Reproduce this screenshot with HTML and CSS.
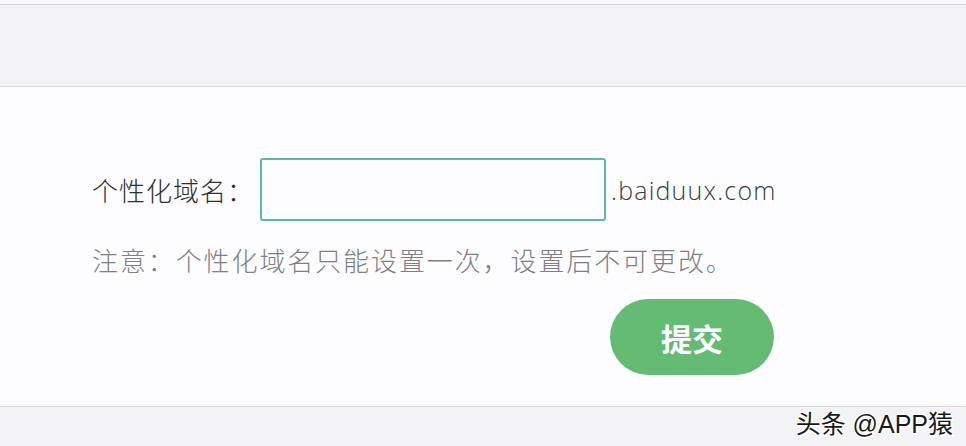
FILE: index.html
```html
<!DOCTYPE html>
<html lang="zh-CN">
<head>
<meta charset="utf-8">
<title>个性化域名</title>
<link rel="stylesheet" href="styles.css">
</head>
<body>
<div class="top-strip"></div>
<div class="header-band"></div>
<main class="panel">
  <form class="domain-form">
    <div class="field-row">
      <label class="field-label" for="domain">个性化域名：</label>
      <input class="field-input" id="domain" type="text">
      <span class="field-suffix">.baiduux.com</span>
    </div>
    <p class="notice">注意：个性化域名只能设置一次，设置后不可更改。</p>
    <button class="submit-btn" type="button">提交</button>
  </form>
</main>
<div class="footer-band"></div>
<div class="watermark">头条 @APP猿</div>
</body>
</html>
```

FILE: styles.css
```css
html, body {
  margin: 0;
  padding: 0;
}
body {
  width: 966px;
  height: 446px;
  overflow: hidden;
  background: #f3f2f4;
  font-family: "Noto Sans CJK SC", "Noto Sans", sans-serif;
  position: relative;
}
.top-strip {
  height: 4px;
  background: #f8f7f9;
  border-bottom: 1px solid #d9d8da;
}
.header-band {
  height: 81px;
  background: #f3f2f4;
  border-bottom: 1px solid #dedde0;
}
.panel {
  height: 320px;
  box-sizing: border-box;
  background: #fdfcfe;
  border-bottom: 1px solid #d9d8da;
  padding: 71px 0 0 92px;
}
.domain-form {
  width: 682px;
  display: flex;
  flex-direction: column;
  margin: 0;
}
.field-row {
  display: flex;
  align-items: center;
}
.field-label {
  flex: none;
  font-size: 26px;
  font-weight: 300;
  letter-spacing: 1px;
  color: #2e2e2e;
  width: 168px;
  white-space: nowrap;
}
.field-input {
  flex: none;
  width: 346px;
  height: 63px;
  box-sizing: border-box;
  border: 2px solid #5bb6b5;
  border-radius: 3px;
  background: #fdfcfe;
  margin: 0;
  outline: none;
}
.field-suffix {
  flex: none;
  margin-left: 5px;
  font-family: "Open Sans", "Noto Sans", sans-serif;
  font-size: 25px;
  font-weight: 300;
  color: #3e3e3e;
  letter-spacing: 1.2px;
  white-space: nowrap;
}
.notice {
  margin: 14px 0 0;
  font-size: 26px;
  font-weight: 300;
  letter-spacing: 1.9px;
  color: #807f81;
  line-height: 50px;
}
.submit-btn {
  align-self: flex-end;
  margin-top: 14px;
  width: 164px;
  height: 76px;
  border: none;
  border-radius: 38px;
  background: #64bb74;
  color: #ffffff;
  font-family: "Noto Sans CJK SC", sans-serif;
  font-size: 31px;
  font-weight: 700;
  padding: 0;
}
.watermark {
  position: absolute;
  right: 13px;
  bottom: 8px;
  font-family: "Liberation Sans", "Noto Sans CJK SC", sans-serif;
  font-size: 25px;
  line-height: 28px;
  color: #1a1a1a;
  text-shadow: 1px 1px 0 #fff, -1px -1px 0 #fff, 1px -1px 0 #fff, -1px 1px 0 #fff, 2px 2px 0 #fff;
}
```
